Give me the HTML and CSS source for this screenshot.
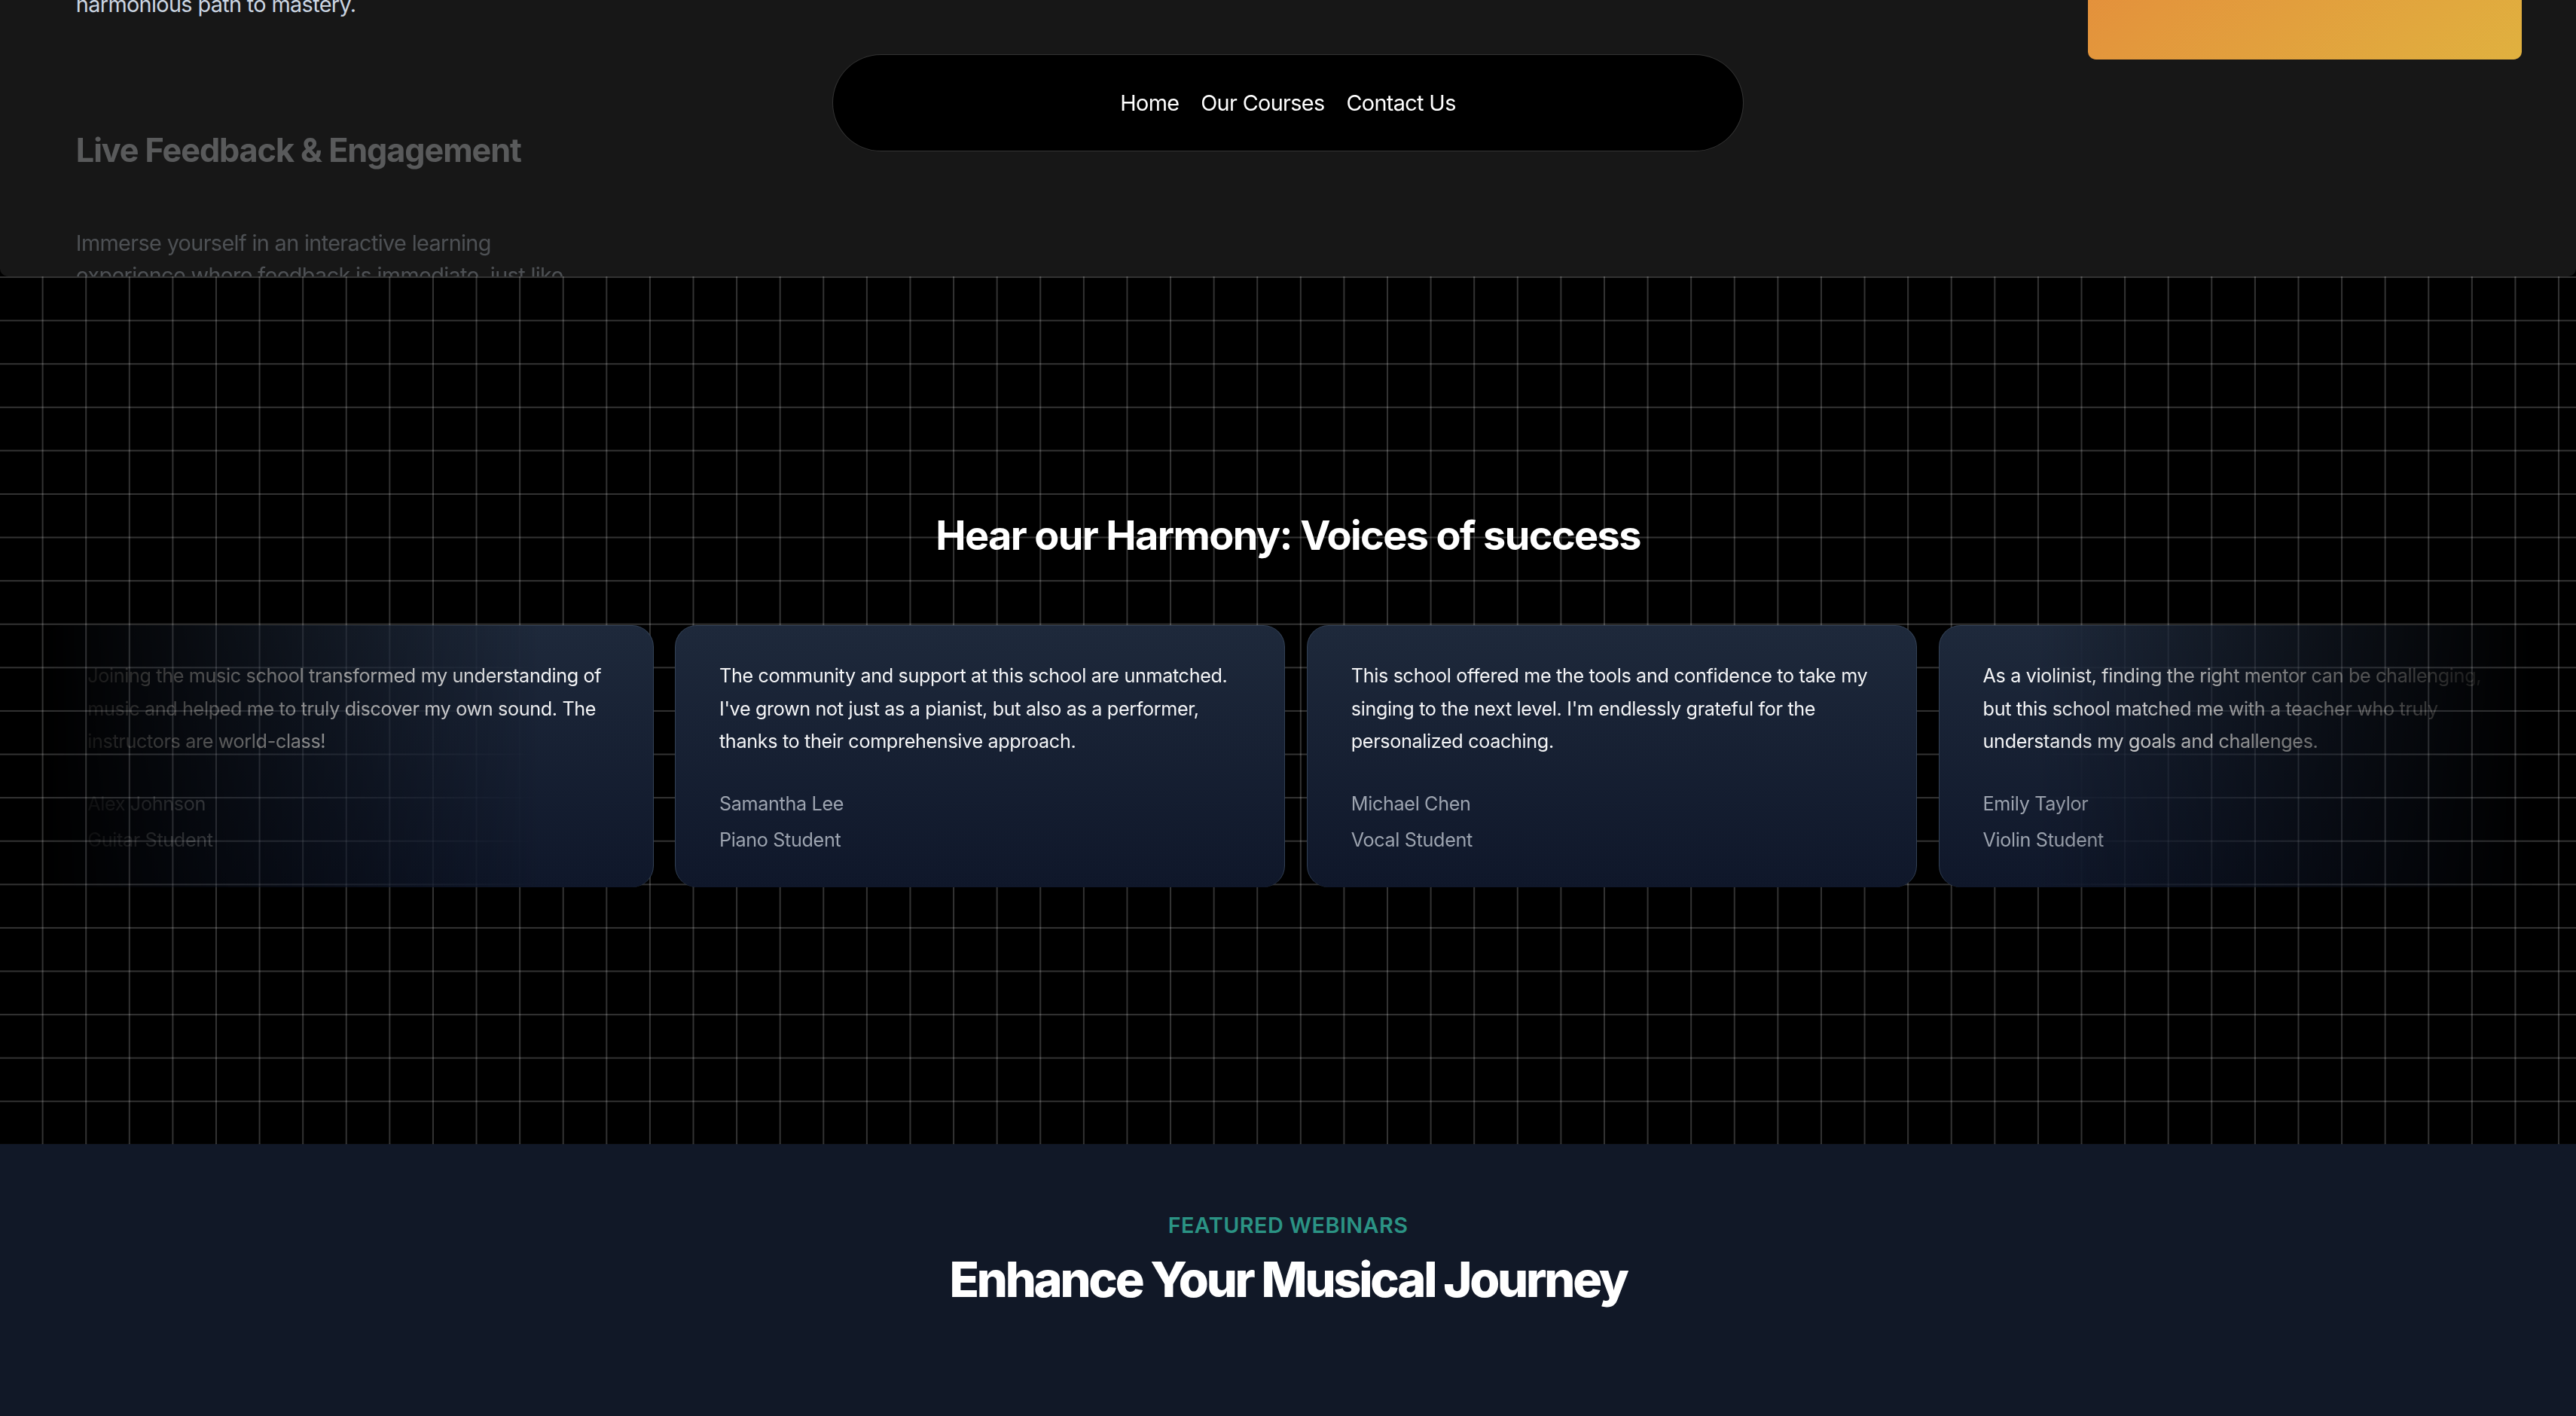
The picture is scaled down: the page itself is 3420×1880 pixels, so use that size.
FILE: index.html
```html
<!DOCTYPE html>
<html lang="en">
<head>
<meta charset="utf-8">
<title>Music School</title>
<link rel="stylesheet" href="styles.css">
</head>
<body>
<div class="page">
  <section class="reveal">
    <div class="reveal-text">
      <p class="reveal-tail">harmonious path to mastery.</p>
      <div class="reveal-item">
        <h2 class="reveal-title">Live Feedback &amp; Engagement</h2>
        <p class="reveal-desc">Immerse yourself in an interactive learning experience where feedback is immediate, just like performing on a stage. Our real-time interaction ensures you grasp every note perfectly.</p>
      </div>
    </div>
    <div class="reveal-card"></div>
  </section>

  <nav class="navbar">
    <a class="nav-link" href="#">Home</a>
    <a class="nav-link" href="#">Our Courses</a>
    <a class="nav-link" href="#">Contact Us</a>
  </nav>

  <section class="testimonials">
    <h2 class="test-title">Hear our Harmony: Voices of success</h2>
    <div class="test-wrap">
      <div class="scroller">
        <ul class="cards">
          <li class="card">
            <blockquote>
              <span class="quote-text">Joining the music school transformed my understanding of music and helped me to truly discover my own sound. The instructors are world-class!</span>
              <div class="author">
                <span class="author-info">
                  <span class="author-line">Alex Johnson</span>
                  <span class="author-line">Guitar Student</span>
                </span>
              </div>
            </blockquote>
          </li>
          <li class="card">
            <blockquote>
              <span class="quote-text">The community and support at this school are unmatched. I've grown not just as a pianist, but also as a performer, thanks to their comprehensive approach.</span>
              <div class="author">
                <span class="author-info">
                  <span class="author-line">Samantha Lee</span>
                  <span class="author-line">Piano Student</span>
                </span>
              </div>
            </blockquote>
          </li>
          <li class="card">
            <blockquote>
              <span class="quote-text">This school offered me the tools and confidence to take my singing to the next level. I'm endlessly grateful for the personalized coaching.</span>
              <div class="author">
                <span class="author-info">
                  <span class="author-line">Michael Chen</span>
                  <span class="author-line">Vocal Student</span>
                </span>
              </div>
            </blockquote>
          </li>
          <li class="card">
            <blockquote>
              <span class="quote-text">As a violinist, finding the right mentor can be challenging, but this school matched me with a teacher who truly understands my goals and challenges.</span>
              <div class="author">
                <span class="author-info">
                  <span class="author-line">Emily Taylor</span>
                  <span class="author-line">Violin Student</span>
                </span>
              </div>
            </blockquote>
          </li>
          <li class="card">
            <blockquote>
              <span class="quote-text">Joining the music school transformed my understanding of music and helped me to truly discover my own sound. The instructors are world-class!</span>
              <div class="author">
                <span class="author-info">
                  <span class="author-line">Alex Johnson</span>
                  <span class="author-line">Guitar Student</span>
                </span>
              </div>
            </blockquote>
          </li>
        </ul>
      </div>
    </div>
  </section>

  <section class="webinars">
    <div class="webinars-inner">
      <h2 class="eyebrow">Featured Webinars</h2>
      <p class="headline">Enhance Your Musical Journey</p>
    </div>
  </section>
</div>
</body>
</html>
```

FILE: styles.css
```css
*, *::before, *::after {
  box-sizing: border-box;
}

html, body {
  margin: 0;
  padding: 0;
  background: #000;
}

body {
  font-family: Inter, "Noto Sans", "Liberation Sans", sans-serif;
  font-size: 28.8px;
  line-height: 1.5;
  letter-spacing: -0.022em;
  color: #fff;
  overflow: hidden;
}

h1, h2, h3, p, blockquote, ul, li {
  margin: 0;
  padding: 0;
}

ul {
  list-style: none;
}

/* ---------- sticky reveal block (top) ---------- */
.reveal {
  height: 367px;
  background: #171717;
  border-radius: 0 0 10.8px 10.8px;
  overflow: hidden;
  display: flex;
  justify-content: space-between;
  align-items: flex-start;
  padding: 0 72px;
}

.reveal-text {
  padding: 0 28.8px;
}

.reveal-tail {
  margin-top: -16px;
  max-width: 691.2px;
  color: #cbd5e1;
}

.reveal-item {
  margin-top: 144px;
  opacity: 0.3;
}

.reveal-title {
  font-size: 43.2px;
  line-height: 57.6px;
  font-weight: 700;
  letter-spacing: -0.025em;
  color: #f1f5f9;
}

.reveal-desc {
  margin-top: 72px;
  max-width: 691.2px;
  color: #cbd5e1;
}

.reveal-card {
  flex-shrink: 0;
  width: 576px;
  height: 432px;
  margin-top: -353px;
  border-radius: 10.8px;
  background: linear-gradient(to bottom right, #e67b39, #e0b13f);
}

/* ---------- floating navbar ---------- */
.navbar {
  position: fixed;
  top: 72px;
  left: 0;
  right: 0;
  margin: 0 auto;
  max-width: 1209.6px;
  z-index: 50;
  display: flex;
  justify-content: center;
  gap: 28.8px;
  padding: 42px 57.6px;
  background: #000;
  border: 1.8px solid rgba(255, 255, 255, 0.2);
  border-radius: 9999px;
}

.nav-link {
  color: #fff;
  text-decoration: none;
}

/* ---------- testimonials ---------- */
.testimonials {
  height: 1152px;
  background-color: #000;
  background-image:
    linear-gradient(to bottom, rgba(255, 255, 255, 0.2) 1.8px, transparent 1.8px),
    linear-gradient(to left, rgba(255, 255, 255, 0.2) 1.8px, transparent 1.8px);
  background-size: 57.6px 57.6px;
  display: flex;
  flex-direction: column;
  align-items: center;
  justify-content: center;
  overflow: hidden;
}

.test-title {
  position: relative;
  z-index: 10;
  margin-bottom: 57.6px;
  font-size: 54px;
  line-height: 64.8px;
  font-weight: 700;
  letter-spacing: -0.03em;
  text-align: center;
  color: #fff;
}

.test-wrap {
  width: 100%;
  display: flex;
  justify-content: center;
  padding: 0 57.6px;
  overflow: hidden;
}

.scroller {
  width: 100%;
  overflow: hidden;
  -webkit-mask-image: linear-gradient(to right, transparent, #fff 20%, #fff 80%, transparent);
  mask-image: linear-gradient(to right, transparent, #fff 20%, #fff 80%, transparent);
}

.cards {
  display: flex;
  flex-wrap: nowrap;
  gap: 28.8px;
  width: max-content;
  padding: 28.8px 0;
}

.card {
  width: 810px;
  flex-shrink: 0;
  border: 1.8px solid #334155;
  border-bottom: 0;
  border-radius: 28.8px;
  padding: 43.2px 57.6px;
  background: linear-gradient(180deg, #1e293b, #0f172a);
}

.quote-text {
  font-size: 25.2px;
  line-height: 1.6;
  letter-spacing: -0.014em;
  color: #f3f4f6;
}

.author {
  margin-top: 43.2px;
  display: flex;
  align-items: center;
}

.author-info {
  display: flex;
  flex-direction: column;
  gap: 7.2px;
}

.author-line {
  font-size: 25.2px;
  line-height: 1.6;
  letter-spacing: -0.014em;
  color: #9ca3af;
}

/* ---------- webinars ---------- */
.webinars {
  min-height: 600px;
  padding: 86.4px;
  background: #111827;
}

.webinars-inner {
  max-width: 2304px;
  margin: 0 auto;
  padding: 0 57.6px;
  text-align: center;
}

.eyebrow {
  font-size: 28.8px;
  line-height: 43.2px;
  font-weight: 600;
  letter-spacing: 0.015em;
  text-transform: uppercase;
  color: #2b9384;
}

.headline {
  margin-top: 14.4px;
  font-size: 64.8px;
  line-height: 72px;
  font-weight: 800;
  letter-spacing: -0.05em;
  color: #fff;
}
```
